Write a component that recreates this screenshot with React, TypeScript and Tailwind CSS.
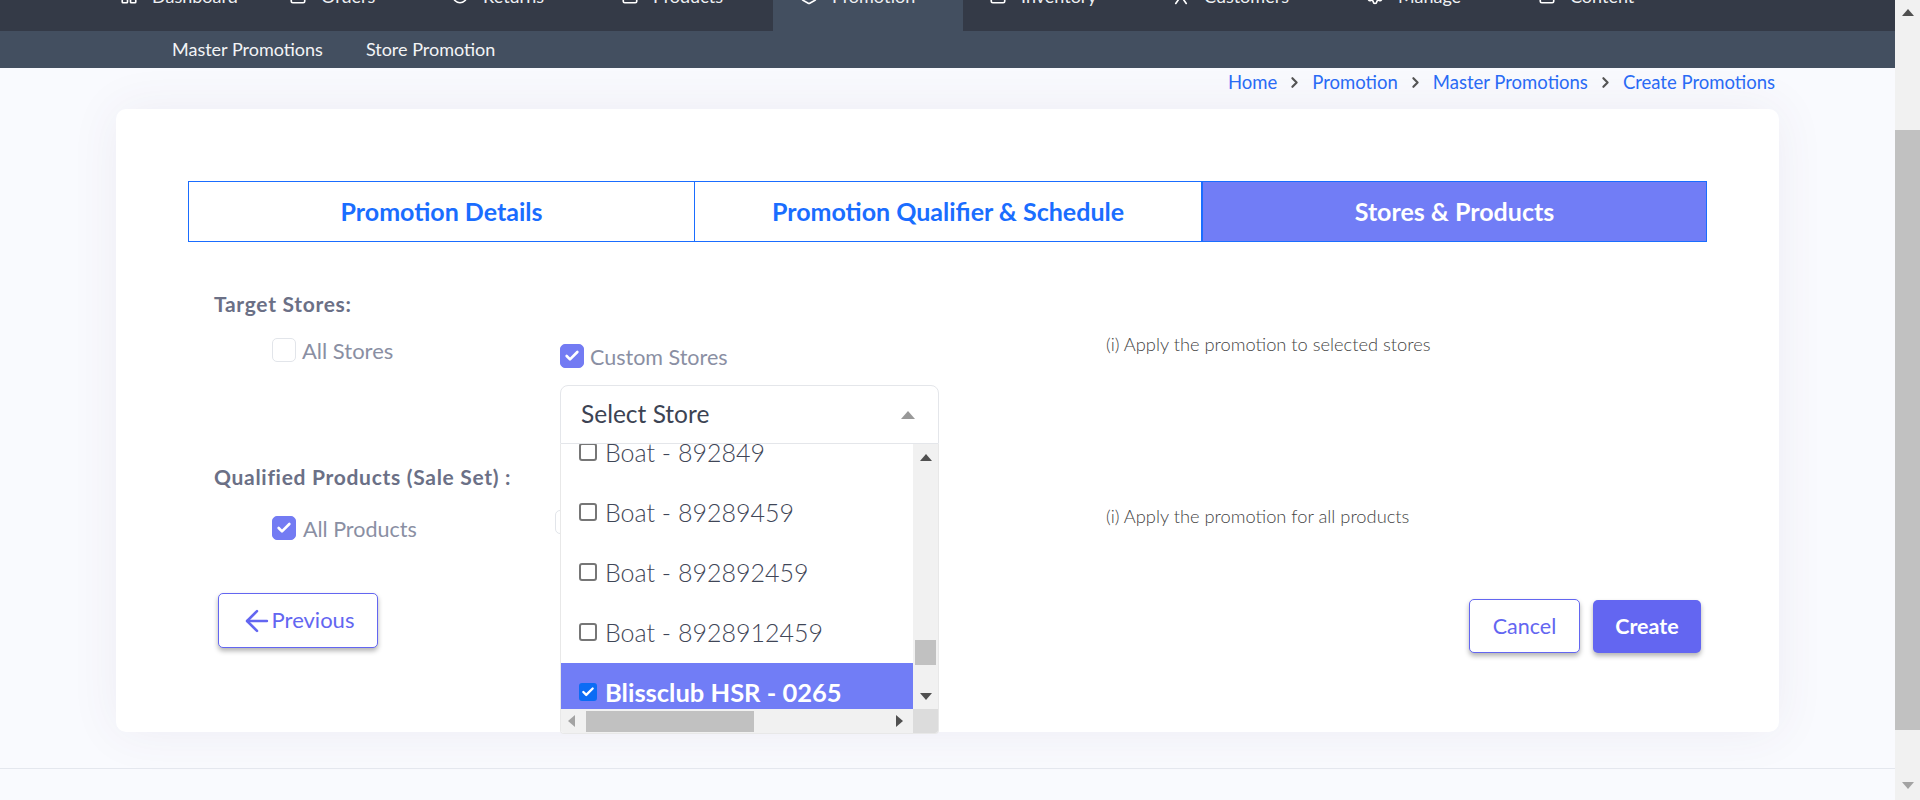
import { ArrowLeft, Check, ChevronDown, ChevronRight, Hexagon, LayoutGrid, RotateCw, Settings, Square } from "lucide-react";

const font = "font-['Lato','Noto_Sans',sans-serif]";

function Person({ size = 18, strokeWidth = 2.2, className = "" }: { size?: number; strokeWidth?: number; className?: string }) {
  return (
    <svg width={size} height={size} viewBox="0 0 24 24" fill="none" stroke="currentColor" strokeWidth={strokeWidth} strokeLinecap="round" className={className}>
      <circle cx="12" cy="7" r="5" />
      <path d="M12 12 L5 22 M12 12 L19 22" />
    </svg>
  );
}

function Box({ on, className = "" }: { on?: boolean; className?: string }) {
  return (
    <span
      className={
        "flex h-[24px] w-[24px] shrink-0 items-center justify-center rounded-[5px] border " +
        (on ? "border-[#737bf3] bg-[#737bf3] " : "border-[#e2e5ea] bg-white ") +
        className
      }
    >
      {on && <Check size={16} strokeWidth={4} className="text-white" />}
    </span>
  );
}

function Row({ text, on }: { text: string; on?: boolean }) {
  return (
    <div className={"flex h-[60px] shrink-0 items-center pl-[18px] " + (on ? "bg-[#717df6] font-bold text-white" : "font-light text-[#3f4657]")}>
      <span
        className={
          "mr-[8px] -mt-[2px] flex h-[18px] w-[18px] shrink-0 items-center justify-center rounded-[3px] border-2 " +
          (on ? "border-[#0b6cf5] bg-[#0b6cf5]" : "border-[#767676] bg-white")
        }
      >
        {on && <Check size={14} strokeWidth={4} className="text-white" />}
      </span>
      <span className={"-mt-[1px] whitespace-nowrap leading-none " + (on ? "text-[25.5px]" : "text-[25px]")}>{text}</span>
    </div>
  );
}

const Up = ({ c = "border-b-[#505050]" }: { c?: string }) => (
  <span className={"block h-0 w-0 border-x-[6px] border-b-[7px] border-x-transparent " + c} />
);
const Down = ({ c = "border-t-[#505050]" }: { c?: string }) => (
  <span className={"block h-0 w-0 border-x-[6px] border-t-[7px] border-x-transparent " + c} />
);

function NavItem({ w, label, Icon, active }: { w: string; label: string; Icon: any; active?: boolean }) {
  return (
    <div className={w + " h-[31px] shrink-0 overflow-hidden " + (active ? "bg-[#434f60] pl-[27px]" : "")}>
      <div className="-mt-[16px] flex h-[24px] items-center gap-[14px] text-[18px] text-[#eef0f3]">
        <Icon size={18} strokeWidth={2.2} className="shrink-0 text-white" />
        <span className="whitespace-nowrap">{label}</span>
        {active && <ChevronDown size={15} className="-ml-[6px] shrink-0" />}
      </div>
    </div>
  );
}

function Crumb() {
  return <ChevronRight size={17} strokeWidth={3} className="mx-[9px] mt-[4px] text-[#555]" />;
}

export default function App() {
  return (
    <div className={"flex h-[800px] w-full overflow-hidden bg-[#f9fafe] " + font}>
      <div className="flex h-[800px] w-[1895px] shrink-0 flex-col">
        <nav className="flex h-[31px] shrink-0 bg-[#343a47] pl-[120px]">
          <NavItem w="w-[169px]" label="Dashboard" Icon={LayoutGrid} />
          <NavItem w="w-[162px]" label="Orders" Icon={Square} />
          <NavItem w="w-[170px]" label="Returns" Icon={RotateCw} />
          <NavItem w="w-[152px]" label="Products" Icon={Square} />
          <NavItem w="w-[190px]" label="Promotion" Icon={Hexagon} active />
          <div className="w-[26px] shrink-0" />
          <NavItem w="w-[183px]" label="Inventory" Icon={Square} />
          <NavItem w="w-[194px]" label="Customers" Icon={Person} />
          <NavItem w="w-[172px]" label="Manage" Icon={Settings} />
          <NavItem w="w-[110px]" label="Content" Icon={Square} />
        </nav>
        <div className="flex h-[37px] shrink-0 items-center gap-[43px] bg-[#434f60] pl-[172px] text-[18px] text-[#f3f4f6]">
          <span>Master Promotions</span>
          <span>Store Promotion</span>
        </div>
        <div className="flex h-[41px] shrink-0 items-start justify-end pr-[120px] pt-[2px] text-[18.5px] leading-[24px] text-[#2a6cf6]">
          <span>Home</span>
          <Crumb />
          <span>Promotion</span>
          <Crumb />
          <span>Master Promotions</span>
          <Crumb />
          <span>Create Promotions</span>
        </div>

        <main className="ml-[116px] h-[623px] w-[1663px] shrink-0 rounded-[10px] bg-white px-[72px] pt-[72px] shadow-[0_0_50px_rgba(82,63,105,0.07)]">
          <div className="flex h-[61px] w-[1519px] border border-[#1a6dff] text-[25px] font-bold">
            <div className="flex w-[505px] shrink-0 items-center justify-center text-[#1a6dff]">Promotion Details</div>
            <div className="flex w-[507px] shrink-0 items-center justify-center border-l border-[#1a6dff] text-[#1a6dff]">Promotion Qualifier &amp; Schedule</div>
            <div className="flex flex-1 items-center justify-center border-l-2 border-[#1a6dff] bg-[#717df6] text-white">Stores &amp; Products</div>
          </div>

          <div className="mt-[50px] pl-[26px]">
            <div className="h-[25px] text-[21px] font-bold leading-[24px] tracking-[0.7px] text-[#6b7086]">Target Stores:</div>
            <div className="mt-[21px] grid h-[127px] grid-cols-[346px_546px_1fr]">
              <div className="flex items-start gap-[6px] pl-[58px]">
                <Box />
                <span className="text-[22px] leading-[25px] text-[#8a8fa3]">All Stores</span>
              </div>
              <div className="relative pt-[6px]">
                <div className="flex items-start gap-[6px]">
                  <Box on />
                  <span className="text-[21.5px] leading-[26px] text-[#8a8fa3]">Custom Stores</span>
                </div>
                <div className="absolute left-0 top-[47px] z-10 w-[379px]">
                  <div className="flex h-[59px] items-center justify-between rounded-t-[8px] border border-[#e4e6ea] bg-white pl-[20px] pr-[23px]">
                    <span className="-mt-[2px] text-[24.5px] leading-[30px] text-[#3c4353]">Select Store</span>
                    <span className="block h-0 w-0 border-x-[7px] border-b-[8px] border-x-transparent border-b-[#999999]" />
                  </div>
                  <div className="grid h-[290px] grid-cols-[352px_25px] grid-rows-[265px_24px] overflow-hidden rounded-b-[4px] border-x border-b border-[#e8e8e8] bg-white">
                    <div className="flex flex-col overflow-hidden">
                      <div className="-mt-[21px] flex flex-col">
                        <Row text="Boat - 892849" />
                        <Row text="Boat - 89289459" />
                        <Row text="Boat - 892892459" />
                        <Row text="Boat - 8928912459" />
                        <Row text="Blissclub HSR - 0265" on />
                      </div>
                    </div>
                    <div className="flex flex-col items-center bg-[#f1f1f1] pt-[10px]">
                      <Up />
                      <div className="mt-[179px] h-[25px] w-[21px] shrink-0 bg-[#c1c1c1]" />
                      <div className="mt-[28px]"><Down /></div>
                    </div>
                    <div className="flex items-center bg-[#f1f1f1] pl-[7px]">
                      <span className="block h-0 w-0 border-y-[6px] border-r-[7px] border-y-transparent border-r-[#a3a3a3]" />
                      <div className="ml-[11px] h-[21px] w-[168px] bg-[#c1c1c1]" />
                      <span className="ml-[142px] block h-0 w-0 border-y-[6px] border-l-[7px] border-y-transparent border-l-[#505050]" />
                    </div>
                    <div className="bg-[#dcdcdc]" />
                  </div>
                </div>
              </div>
              <div className="-mt-[2px] whitespace-nowrap text-[18.3px] font-light leading-[16px] text-[#444]">(i) Apply the promotion to selected stores</div>
            </div>

            <div className="h-[24px] text-[21px] font-bold leading-[24px] tracking-[0.7px] text-[#6b7086]">Qualified Products (Sale Set) :</div>
            <div className="mt-[27px] grid h-[77px] grid-cols-[346px_546px_1fr]">
              <div className="flex items-start gap-[7px] pl-[58px]">
                <Box on />
                <span className="text-[21.5px] leading-[26px] text-[#8a8fa3]">All Products</span>
              </div>
              <div className="-ml-[5px] -mt-[6px]">
                <Box />
              </div>
              <div className="-mt-[8px] whitespace-nowrap text-[18.3px] font-light leading-[16px] text-[#444]">(i) Apply the promotion for all products</div>
            </div>

            <div className="ml-[4px] flex w-[1483px] items-start justify-between">
              <button className="flex h-[55px] w-[160px] items-center justify-center rounded-[5px] border border-[#6366f1] bg-white text-[22px] leading-none text-[#6366f1] shadow-[0_3px_5px_rgba(0,0,0,0.3)]">
                <ArrowLeft size={34} strokeWidth={1.8} className="-mx-[2px]" />
                <span className="-mt-[2px]">Previous</span>
              </button>
              <div className="mt-[6px] flex items-start gap-[13px]">
                <button className="h-[54px] w-[111px] rounded-[5px] border border-[#6366f1] bg-white text-[21.5px] text-[#6366f1] shadow-[0_3px_5px_rgba(0,0,0,0.3)]">Cancel</button>
                <button className="mt-[1px] h-[53px] w-[108px] rounded-[5px] bg-[#6366f1] text-[21.5px] font-bold text-white shadow-[0_3px_5px_rgba(0,0,0,0.3)]">Create</button>
              </div>
            </div>
          </div>
        </main>
        <div className="mt-[36px] h-[1px] shrink-0 bg-[#e4e7ee]" />
      </div>

      <aside className="flex h-[800px] w-[25px] shrink-0 flex-col items-center bg-[#f1f1f1] pt-[9px]">
        <Up />
        <div className="mt-[114px] h-[600px] w-[25px] shrink-0 bg-[#c1c1c1]" />
        <div className="mt-[52px]"><Down c="border-t-[#a3a3a3]" /></div>
      </aside>
    </div>
  );
}
